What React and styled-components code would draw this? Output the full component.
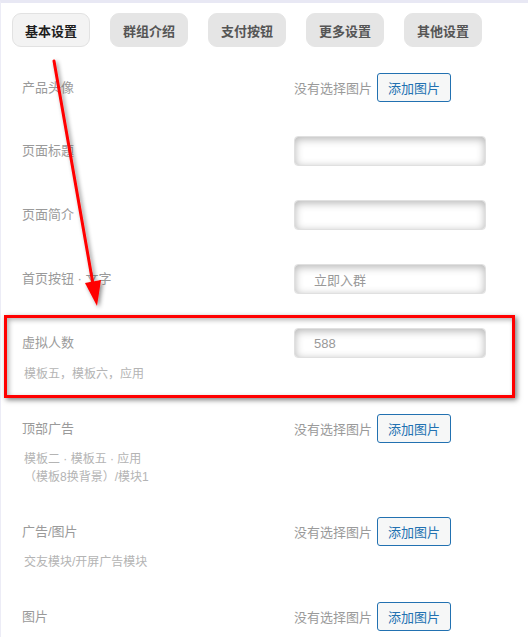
import React from "react";
import styled, { createGlobalStyle } from "styled-components";

const Global = createGlobalStyle`
  html, body { margin: 0; padding: 0; background: #fff; }
  body { font-family: "Liberation Sans", "Noto Sans CJK SC", sans-serif; }
  * { box-sizing: border-box; }
`;

const Page = styled.div`
  position: relative;
  width: 528px;
  height: 637px;
  overflow: hidden;
  background: #fff;
  border-top: 3px solid #e8e8f4;
  border-left: 1px solid #ececf6;
`;

const Tabs = styled.div`
  display: flex;
  gap: 20px;
  padding: 10px 0 0 11px;
`;

const Tab = styled.div`
  width: 78px;
  height: 34px;
  display: flex;
  align-items: center;
  justify-content: center;
  border-radius: 9px;
  font-size: 13px;
  font-weight: 700;
  color: ${(p) => (p.$active ? "#1e1e1e" : "#555")};
  background: ${(p) => (p.$active ? "#f3f3f3" : "#e5e5e5")};
  border: 1px solid ${(p) => (p.$active ? "#e2e2e2" : "#e5e5e5")};
`;

const List = styled.div`
  margin-top: 9px;
  padding-left: 21px;
`;

const Row = styled.div`
  padding: 17px 0;
`;

const Main = styled.div`
  display: grid;
  grid-template-columns: 272px 192px;
  align-items: center;
`;

const Label = styled.div`
  font-size: 13px;
  color: #9a9a9a;
  line-height: 18px;
`;

const Control = styled.div`
  display: flex;
  align-items: center;
  gap: 5px;
`;

const NoImage = styled.span`
  font-size: 13px;
  color: #9a9a9a;
  white-space: nowrap;
`;

const AddButton = styled.div`
  height: 29px;
  padding: 0 10px;
  display: flex;
  align-items: center;
  border: 1px solid #2271b1;
  border-radius: 3px;
  background: #f6f7f7;
  color: #2271b1;
  font-size: 13px;
  white-space: nowrap;
`;

const Input = styled.div`
  width: 192px;
  height: 30px;
  border-radius: 4px;
  border: 1px solid #e0e0e0;
  background: #fff;
  box-shadow: inset 0 2px 8px rgba(0, 0, 0, 0.3);
  display: flex;
  align-items: center;
  padding-left: 19px;
  font-size: 13px;
  color: #999;
`;

const Desc = styled.div`
  margin: 7px 0 -3px 2px;
  font-size: 12px;
  line-height: 18px;
  color: #b4b4b4;
`;

const Highlight = styled.div`
  position: absolute;
  left: 3px;
  top: 312px;
  width: 511px;
  height: 83px;
  border: 3px solid #ff0000;
  box-shadow: 2px 2px 5px rgba(0, 0, 0, 0.5), inset 2px 2px 5px rgba(0, 0, 0, 0.3);
  pointer-events: none;
`;

const ArrowSvg = styled.svg`
  position: absolute;
  left: 0;
  top: 0;
  pointer-events: none;
`;

const ImageRow = ({ label, desc }) => (
  <Row>
    <Main>
      <Label>{label}</Label>
      <Control>
        <NoImage>没有选择图片</NoImage>
        <AddButton>添加图片</AddButton>
      </Control>
    </Main>
    {desc && <Desc>{desc}</Desc>}
  </Row>
);

const InputRow = ({ label, value, desc }) => (
  <Row>
    <Main>
      <Label>{label}</Label>
      <Input>{value}</Input>
    </Main>
    {desc && <Desc>{desc}</Desc>}
  </Row>
);

const tabs = ["基本设置", "群组介绍", "支付按钮", "更多设置", "其他设置"];

export default function App() {
  return (
    <>
      <Global />
      <Page>
        <Tabs>
          {tabs.map((t, i) => (
            <Tab key={t} $active={i === 0}>
              {t}
            </Tab>
          ))}
        </Tabs>
        <List>
          <ImageRow label="产品头像" />
          <InputRow label="页面标题" />
          <InputRow label="页面简介" />
          <InputRow label="首页按钮 · 文字" value="立即入群" />
          <InputRow label="虚拟人数" value="588" desc="模板五，模板六，应用" />
          <ImageRow
            label="顶部广告"
            desc={
              <>
                模板二 · 模板五 · 应用
                <br />
                （模板8换背景）/模块1
              </>
            }
          />
          <ImageRow label="广告/图片" desc="交友模块/开屏广告模块" />
          <ImageRow label="图片" />
        </List>
        <Highlight />
        <ArrowSvg width="528" height="637" viewBox="0 -3 528 637">
          <defs>
            <filter id="sh" x="-50%" y="-50%" width="200%" height="200%">
              <feDropShadow dx="2" dy="2" stdDeviation="2" floodColor="#000" floodOpacity="0.45" />
            </filter>
          </defs>
          <g filter="url(#sh)">
            <line x1="53" y1="55" x2="92" y2="278" stroke="#ff0000" strokeWidth="3" strokeLinecap="round" />
            <polygon points="96,300 100,274 84,277" fill="#ff0000" />
          </g>
        </ArrowSvg>
      </Page>
    </>
  );
}
